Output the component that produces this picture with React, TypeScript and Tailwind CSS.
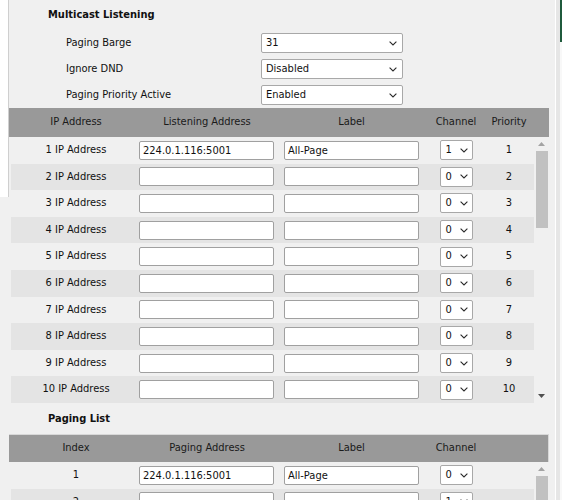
import React from "react";

function Chevron() {
  return (
    <svg width="8" height="5" viewBox="0 0 8 5" className="shrink-0">
      <path d="M0.6 0.6 L4 4 L7.4 0.6" fill="none" stroke="#2a2a2a" strokeWidth="1.1" />
    </svg>
  );
}

function TopSelect({ value }: { value: string }) {
  return (
    <div className="w-[142px] h-[20px] bg-white border border-[#a8a8a8] rounded-[2px] flex items-center justify-between pl-[4px] pr-[5px]">
      <span>{value}</span>
      <Chevron />
    </div>
  );
}

function ChSelect({ value }: { value: string }) {
  return (
    <div className="w-[33px] h-[20px] bg-white border border-[#a8a8a8] rounded-[2px] flex items-center justify-between pl-[5px] pr-[4px]">
      <span>{value}</span>
      <Chevron />
    </div>
  );
}

function TextBox({ value }: { value: string }) {
  return (
    <div className="w-[135px] h-[19px] bg-white border border-[#a0a0a0] rounded-[2px] flex items-center pl-[3px] leading-none">
      {value}
    </div>
  );
}

function UpArrow({ color }: { color: string }) {
  return (
    <svg width="7" height="4" viewBox="0 0 7 4">
      <path d="M0 4 L3.5 0 L7 4 Z" fill={color} />
    </svg>
  );
}

function DownArrow({ color }: { color: string }) {
  return (
    <svg width="7" height="4" viewBox="0 0 7 4">
      <path d="M0 0 L3.5 4 L7 0 Z" fill={color} />
    </svg>
  );
}

const listening = Array.from({ length: 10 }, (_, i) => ({
  n: i + 1,
  addr: i === 0 ? "224.0.1.116:5001" : "",
  label: i === 0 ? "All-Page" : "",
  ch: i === 0 ? "1" : "0",
}));

export default function App() {
  return (
    <div className="w-[562px] h-[500px] overflow-hidden bg-[#f0f0f0] flex text-[11px] text-[#111111] font-['DejaVu_Sans_Condensed','DejaVu_Sans',sans-serif]">
      {/* left strip */}
      <div className="w-[9px] shrink-0 flex flex-col">
        <div className="h-[197px] shrink-0 bg-white border-r border-[#cfcfcf]" />
      </div>

      {/* main panel */}
      <div className="w-[540px] shrink-0 flex flex-col">
        <div className="h-[30px] shrink-0 flex items-center pl-[39px] font-bold">Multicast Listening</div>
        {[
          ["Paging Barge", "31"],
          ["Ignore DND", "Disabled"],
          ["Paging Priority Active", "Enabled"],
        ].map(([l, v]) => (
          <div key={l} className="h-[26px] shrink-0 flex items-center">
            <div className="w-[252px] pl-[57px]">{l}</div>
            <TopSelect value={v} />
          </div>
        ))}

        {/* listening header */}
        <div className="h-[29px] shrink-0 bg-[#999999] flex items-center text-[#1a1a1a]">
          <div className="w-[130px] pl-[4px] text-center">IP Address</div>
          <div className="w-[136px] text-center">Listening Address</div>
          <div className="w-[153px] text-center">Label</div>
          <div className="w-[56px] text-center">Channel</div>
          <div className="w-[50px] text-center">Priority</div>
        </div>

        {/* listening rows */}
        <div className="h-[266px] shrink-0 flex">
          <div className="w-[523px] ml-[2px] flex flex-col overflow-hidden">
            {listening.map((r) => (
              <div
                key={r.n}
                className={`h-[26.6px] shrink-0 flex items-center ${r.n % 2 === 0 ? "bg-[#e4e4e4]" : ""}`}
              >
                <div className="w-[128px] pl-[2px] text-center">{r.n} IP Address</div>
                <div className="w-[136px]">
                  <TextBox value={r.addr} />
                </div>
                <div className="w-[153px] flex justify-center">
                  <TextBox value={r.label} />
                </div>
                <div className="w-[56px] flex justify-center">
                  <ChSelect value={r.ch} />
                </div>
                <div className="w-[50px] text-center">{r.n}</div>
              </div>
            ))}
          </div>
          <div className="w-[15px] flex flex-col items-center">
            <div className="h-[14px] shrink-0 flex items-center justify-center">
              <UpArrow color="#a3a3a3" />
            </div>
            <div className="h-[77px] shrink-0 w-[12px] ml-[1px] bg-[#c1c1c1]" />
            <div className="flex-1" />
            <div className="h-[14px] shrink-0 flex items-center justify-center">
              <DownArrow color="#505050" />
            </div>
          </div>
        </div>

        <div className="h-[31px] shrink-0 flex items-center pl-[39px] font-bold pt-[2px]">Paging List</div>

        <div className="h-[28px] shrink-0 bg-[#999999] flex items-center text-[#1a1a1a] border-t border-r border-[#d8d8d8]">
          <div className="w-[130px] pl-[4px] text-center">Index</div>
          <div className="w-[136px] text-center">Paging Address</div>
          <div className="w-[153px] text-center">Label</div>
          <div className="w-[56px] text-center">Channel</div>
        </div>

        <div className="h-[60px] shrink-0 flex">
          <div className="w-[523px] ml-[2px] flex flex-col overflow-hidden">
            {[1, 2].map((n) => (
              <div key={n} className={`h-[26.6px] shrink-0 flex items-center ${n % 2 === 0 ? "bg-[#e4e4e4]" : ""}`}>
                <div className="w-[128px] pl-[2px] text-center">{n}</div>
                <div className="w-[136px]">
                  <TextBox value={n === 1 ? "224.0.1.116:5001" : ""} />
                </div>
                <div className="w-[153px] flex justify-center">
                  <TextBox value={n === 1 ? "All-Page" : ""} />
                </div>
                <div className="w-[56px] flex justify-center">
                  <ChSelect value={n === 1 ? "0" : "1"} />
                </div>
              </div>
            ))}
          </div>
          <div className="w-[15px] flex flex-col items-center">
            <div className="h-[14px] shrink-0 flex items-center justify-center">
              <UpArrow color="#a3a3a3" />
            </div>
            <div className="flex-1 w-[12px] ml-[1px] bg-[#c1c1c1]" />
          </div>
        </div>
      </div>

      {/* right strip */}
      <div className="w-[13px] shrink-0 flex">
        <div className="w-[6px]" />
        <div className="w-[1px] bg-white" />
        <div className="w-[4px] bg-[#e6e6e6]" />
        <div className="w-[2px] flex flex-col">
          <div className="h-[42px] shrink-0 bg-[#1f5a3c]" />
          <div className="flex-1 bg-[#f8f8f8]" />
        </div>
      </div>
    </div>
  );
}
